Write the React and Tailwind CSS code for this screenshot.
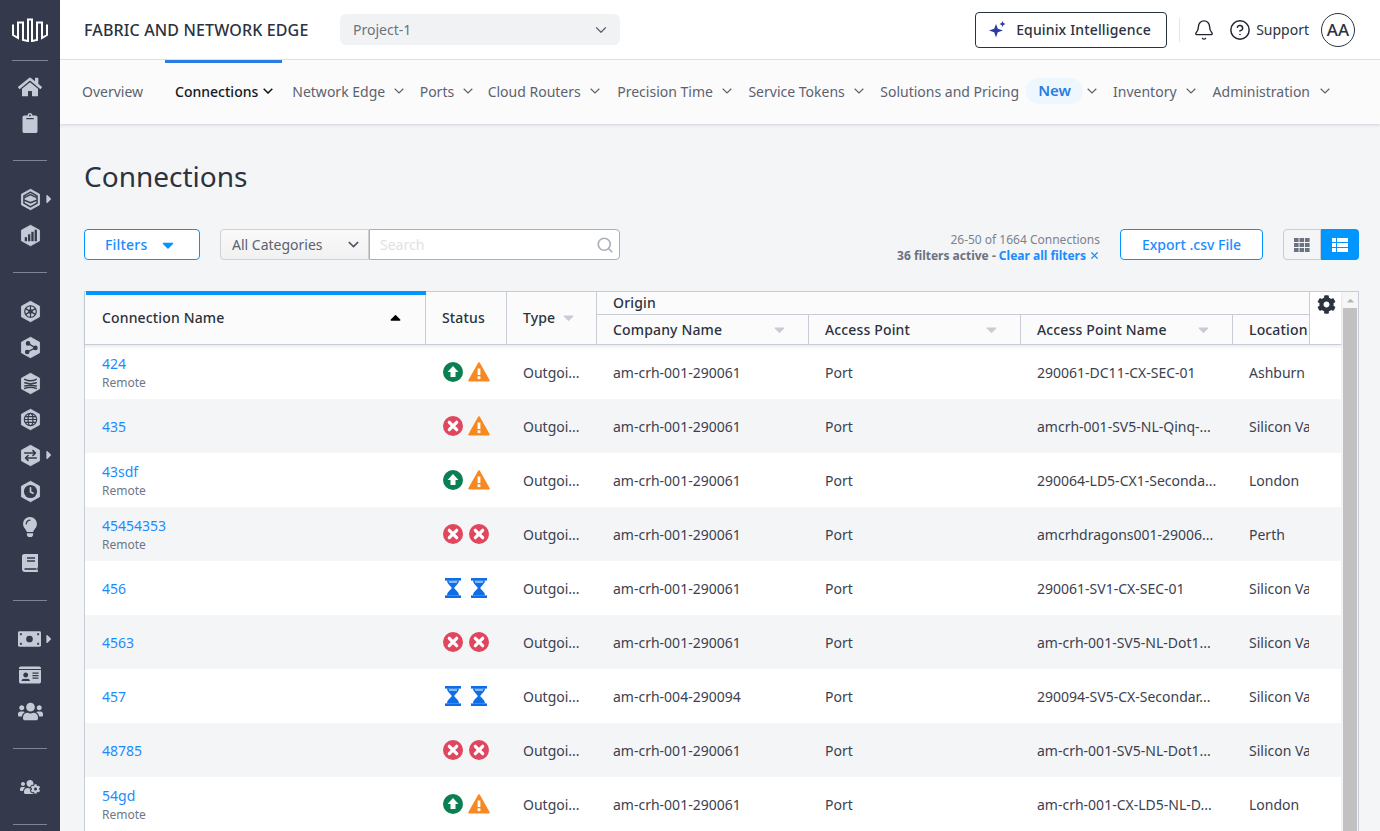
import React from "react";
import { Bell, CircleHelp, ChevronDown, Search, X } from "lucide-react";
import { FaHome, FaClipboard, FaLightbulb, FaIdCard, FaUsers, FaUsersCog, FaCog, FaCaretRight, FaCaretDown, FaCaretUp } from "react-icons/fa";

const C = "#c6cad6";
const D = "#343a4b";

function Hex({ children, size = 23 }) {
  return (
    <svg width={size} height={size} viewBox="0 0 28 28">
      <path d="M14 1.5 L25 7.5 V20.5 L14 26.5 L3 20.5 V7.5 Z" fill={C} stroke={C} strokeWidth="1" strokeLinejoin="round" />
      {children}
    </svg>
  );
}
const s = { stroke: D, strokeWidth: 1.8, fill: "none", strokeLinecap: "round", strokeLinejoin: "round" };

const hexes = {
  fabric: <g {...s}><path d="M14 5 22 9.5V18.5L14 23 6 18.5V9.5Z" /><path d="M7 11.5 14 8l7 3.5" /><path d="M7 15l7 3 7-3" /></g>,
  bars: <g fill={D}><rect x="7" y="16" width="2.8" height="5" /><rect x="11" y="12.5" width="2.8" height="8.5" /><rect x="15" y="9.5" width="2.8" height="11.5" /><rect x="19" y="7" width="2.8" height="14" /></g>,
  wheel: <g {...s} strokeWidth="1.5"><circle cx="14" cy="14" r="7" /><circle cx="14" cy="14" r="2" fill={D} /><path d="M14 7v14M8 10.5l12 7M20 10.5l-12 7" /></g>,
  nodes: <g fill={D} stroke={D} strokeWidth="1.6"><circle cx="11" cy="9" r="2" /><circle cx="20" cy="14.5" r="2" /><circle cx="10" cy="19.5" r="2" /><path d="M11 9 L20 14.5 L10 19.5" fill="none" /></g>,
  stack: <g {...s}><path d="M7 9c4 2 10 2 14 0" /><path d="M7 13l7 1.5 7-1.5" /><path d="M7 17l7-1 7 1" /><path d="M7 20c4-1.5 10-1.5 14 0" /></g>,
  globe: <g {...s} strokeWidth="1.5"><circle cx="14" cy="14" r="7.5" /><ellipse cx="14" cy="14" rx="3" ry="7.5" /><path d="M7 14h14M8 10.5h12M8 17.5h12" /></g>,
  arrows: <g {...s} strokeWidth="2"><path d="M7 11h13M17 8l3 3-3 3" /><path d="M21 17H8M11 14l-3 3 3 3" /></g>,
  clock: <g><circle cx="14" cy="14" r="8" fill={D} /><path d="M14 9.5v5l3.2 1.6" stroke={C} strokeWidth="2" fill="none" strokeLinecap="round" /></g>,
};

function Side({ children, arrow }) {
  return (
    <div className="relative flex h-9 w-[60px] items-center justify-center text-[#c6cad6]">
      {children}
      {arrow && <FaCaretRight className="absolute left-[42px] top-[11px] text-[#c6cad6]" size={14} />}
    </div>
  );
}
const Rule = ({ w = "w-[34px]", mt = "mt-[19px]" }) => <div className={`${mt} h-px ${w} bg-[#7e8494]`} />;

function Sidebar() {
  return (
    <aside className="flex h-full w-[60px] shrink-0 flex-col items-center bg-[#343a4b]">
      <div className="flex h-[60px] items-center justify-center">
        <svg width="36" height="24" viewBox="0 0 36 24" fill="none" stroke="#fff" strokeWidth="2" strokeLinejoin="miter">
          <path d="M1 6.5 V17 L6 20 V4.5 H11 V22 L16 23 V1.5 H20 V23 L25 22 V4.5 H30 V20 L35 17 V6.5" />
        </svg>
      </div>
      <div className="h-px w-9 bg-[#7e8494]" />
      <div className="mt-2" />
      <Side><FaHome size={24} /></Side>
      <Side><FaClipboard size={20} /></Side>
      <Rule />
      <div className="mt-5" />
      <Side arrow><Hex>{hexes.fabric}</Hex></Side>
      <Side><Hex>{hexes.bars}</Hex></Side>
      <Rule />
      <div className="mt-5" />
      <Side><Hex>{hexes.wheel}</Hex></Side>
      <Side><Hex>{hexes.nodes}</Hex></Side>
      <Side><Hex>{hexes.stack}</Hex></Side>
      <Side><Hex>{hexes.globe}</Hex></Side>
      <Side arrow><Hex>{hexes.arrows}</Hex></Side>
      <Side><Hex>{hexes.clock}</Hex></Side>
      <Side><FaLightbulb size={20} /></Side>
      <Side>
        <svg width="18" height="20" viewBox="0 0 18 20">
          <path d="M3 1h14v13c-1 1-1 3 0 4v1H4c-2 0-3-1-3-3V3c0-1 1-2 2-2z" fill={C} />
          <path d="M6 5h8M6 8h8" stroke={D} strokeWidth="1.6" />
          <path d="M3.5 16h12" stroke={D} strokeWidth="1.6" />
        </svg>
      </Side>
      <Rule />
      <div className="mt-5" />
      <Side arrow>
        <svg width="23" height="16" viewBox="0 0 24 16" className="-ml-[1px]">
          <rect width="24" height="16" rx="1.5" fill={C} />
          <circle cx="12" cy="8" r="3.5" fill={D} />
          <g fill={D}><rect x="2" y="2" width="2" height="2" /><rect x="20" y="2" width="2" height="2" /><rect x="2" y="12" width="2" height="2" /><rect x="20" y="12" width="2" height="2" /></g>
        </svg>
      </Side>
      <Side><FaIdCard size={22} /></Side>
      <Side><FaUsers size={25} /></Side>
      <Rule />
      <div className="mt-5" />
      <Side><FaUsersCog size={20} /></Side>
      <Rule />
    </aside>
  );
}

function Header() {
  return (
    <header className="flex h-[60px] shrink-0 items-center border-b border-[#e5e5e5] bg-white pl-6">
      <div className="w-[256px] text-[16px] font-medium leading-none tracking-[0.14px] text-[#2b3240]">FABRIC AND NETWORK EDGE</div>
      <div className="flex h-[31px] w-[280px] items-center justify-between rounded-md bg-[#f1f2f4] pl-[13px] pr-[10px] text-[14px] text-[#6b7280]">
        <span>Project-1</span>
        <ChevronDown size={18} className="text-[#5b6270]" strokeWidth={1.6} />
      </div>
      <div className="ml-auto flex items-center pr-[25px]">
        <button className="flex h-9 w-[192px] items-center rounded border border-[#2b3240] pl-[13px] text-[14px] font-medium tracking-[0.15px] text-[#2b3240]">
          <svg width="17" height="17" viewBox="0 0 17 17" className="mr-[10px]">
            <path d="M7 3 L8.8 7.7 L14 9.5 L8.8 11.3 L7 16.5 L5.2 11.3 L0 9.5 L5.2 7.7 Z" fill="#2a3a9e" />
            <path d="M13.5 0 L14.4 2.1 L16.5 3 L14.4 3.9 L13.5 6 L12.6 3.9 L10.5 3 L12.6 2.1 Z" fill="#2a3a9e" />
          </svg>
          Equinix Intelligence
        </button>
        <div className="ml-3 h-6 w-px bg-[#e2e4e8]" />
        <Bell size={22} strokeWidth={1.5} className="ml-[13px] text-[#1f2430]" />
        <CircleHelp size={22} strokeWidth={1.6} className="ml-[14px] text-[#1f2430]" />
        <span className="ml-[5px] text-[14px] text-[#2b3240]">Support</span>
        <div className="ml-3 flex h-[34px] w-[34px] items-center justify-center rounded-full border border-[#2b3240] text-[17px] font-medium text-[#2b3240]">AA</div>
      </div>
    </header>
  );
}

const Chev = ({ cls = "" }) => (
  <svg width="10" height="6" viewBox="0 0 10 6" fill="none" stroke="#5b6270" strokeWidth="1.2" className={cls}><path d="M.7.8 5 5l4.3-4.2" /></svg>
);

function Nav() {
  const items = [
    ["Network Edge", "mr-[15.5px]"],
    ["Ports", "mr-[14.5px]"],
    ["Cloud Routers", "mr-[17.5px]"],
    ["Precision Time", "mr-[16.5px]"],
    ["Service Tokens", "mr-[16.5px]"],
  ];
  return (
    <nav className="relative z-10 flex h-16 shrink-0 items-center bg-[#fbfbfb] pb-[2px] pl-[22px] text-[14px] text-[#5b6270] shadow-[0_1px_3px_rgba(40,50,70,0.18)]">
      <span className="mr-[32px]">Overview</span>
      <span className="relative mr-[19px] flex items-center font-medium text-[#14181f]">
        <span className="absolute -top-[21px] -left-[10px] h-[3px] w-[117px] bg-[#2a7de1]" />
        Connections
        <svg width="10" height="6" viewBox="0 0 10 6" fill="none" stroke="#14181f" strokeWidth="1.6" className="ml-[5px]"><path d="M.7.8 5 5l4.3-4.2" /></svg>
      </span>
      {items.map(([t, m]) => (
        <span key={t} className={`${m} flex items-center`}>
          {t}
          <Chev cls="ml-[9px]" />
        </span>
      ))}
      <span>Solutions and Pricing</span>
      <span className="ml-[7px] flex h-[26px] w-[57px] items-center justify-center rounded-full bg-[#eef6fe] pb-[2px] text-[15px] font-semibold text-[#2a7de1]">New</span>
      <Chev cls="ml-1" />
      <span className="ml-4 flex items-center">Inventory<Chev cls="ml-[9px]" /></span>
      <span className="ml-[17px] flex items-center">Administration<Chev cls="ml-[10px]" /></span>
    </nav>
  );
}

function Up() {
  return (
    <svg width="20" height="20" viewBox="0 0 20 20"><circle cx="10" cy="10" r="10" fill="#0a7f52" /><path d="M10 4 L15.5 10 H12.5 V15 H7.5 V10 H4.5 Z" fill="#fff" /></svg>
  );
}
function Warn() {
  return (
    <svg width="22" height="20" viewBox="0 0 22 20" className="-ml-px"><path d="M11 1 L21 18.6 H1 Z" fill="#f7891e" stroke="#f7891e" strokeWidth="1.6" strokeLinejoin="round" /><rect x="9.6" y="6.5" width="2.8" height="6.5" fill="#fff" /><rect x="9.6" y="14.3" width="2.8" height="2.8" fill="#fff" /></svg>
  );
}
function Err() {
  return (
    <svg width="20" height="20" viewBox="0 0 20 20"><circle cx="10" cy="10" r="10" fill="#e0475f" /><path d="M6.3 6.3 L13.7 13.7 M13.7 6.3 L6.3 13.7" stroke="#fff" strokeWidth="3.2" strokeLinecap="round" /></svg>
  );
}
function Hour() {
  return (
    <svg width="16" height="20" viewBox="0 0 16 20" className="mx-[2px]">
      <g fill="#0e6ee8">
        <rect x="0" y="0" width="16" height="2.6" />
        <rect x="0" y="17.4" width="16" height="2.6" />
        <path d="M2 2.6H14C14 6 10.2 8 9.2 10 10.2 12 14 14 14 17.4H2C2 14 5.8 12 6.8 10 5.8 8 2 6 2 2.6Z" />
      </g>
      <path d="M3.8 3.6H12.2L11.9 4.6H4.1Z" fill="#fff" />
    </svg>
  );
}

const up = [Up, Warn], ee = [Err, Err], ew = [Err, Warn], hh = [Hour, Hour];
const rows = [
  ["424", true, up, "am-crh-001-290061", "290061-DC11-CX-SEC-01", "Ashburn"],
  ["435", false, ew, "am-crh-001-290061", "amcrh-001-SV5-NL-Qinq-...", "Silicon Valley"],
  ["43sdf", true, up, "am-crh-001-290061", "290064-LD5-CX1-Seconda...", "London"],
  ["45454353", true, ee, "am-crh-001-290061", "amcrhdragons001-29006...", "Perth"],
  ["456", false, hh, "am-crh-001-290061", "290061-SV1-CX-SEC-01", "Silicon Valley"],
  ["4563", false, ee, "am-crh-001-290061", "am-crh-001-SV5-NL-Dot1...", "Silicon Valley"],
  ["457", false, hh, "am-crh-004-290094", "290094-SV5-CX-Secondar...", "Silicon Valley"],
  ["48785", false, ee, "am-crh-001-290061", "am-crh-001-SV5-NL-Dot1...", "Silicon Valley"],
  ["54gd", true, up, "am-crh-001-290061", "am-crh-001-CX-LD5-NL-D...", "London"],
];

function Caret({ cls = "text-[#c8ccd6]" }) {
  return <FaCaretDown size={17} className={cls} />;
}

function TableHead() {
  const sub = "flex h-full items-center border-r border-[#c8ccd6] pl-4 pr-[20px] justify-between";
  return (
    <div className="relative z-10 flex h-[53px] shrink-0 border-b border-[#c8ccd6] bg-[#fbfbfb] text-[14px] font-medium tracking-[0.15px] text-[#2b3240] shadow-[0_2px_3px_rgba(40,50,70,0.1)]">
      <div className="relative ml-px flex h-full w-[340px] items-center justify-between border-r border-[#c8ccd6] pb-[2px] pl-[16px] pr-[21px]">
        <span className="absolute -top-px -left-0 -right-px h-1 bg-[#0095ff]" />
        <span>Connection Name</span>
        <FaCaretUp size={17} className="text-black" />
      </div>
      <div className="flex w-[81px] items-center border-r border-[#c8ccd6] pb-[2px] pl-4">Status</div>
      <div className="flex w-[90px] items-center border-r border-[#c8ccd6] pb-[2px] pl-4">
        Type<Caret cls="ml-[5px] text-[#c8ccd6]" />
      </div>
      <div className="flex min-w-0 flex-1 flex-col">
        <div className="flex h-[23px] shrink-0 items-center border-b border-[#c8ccd6] pb-[2px] pl-4">Origin</div>
        <div className="flex flex-1">
          <div className={`${sub} w-[212px]`}>Company Name<Caret /></div>
          <div className={`${sub} w-[212px]`}>Access Point<Caret /></div>
          <div className={`${sub} w-[212px]`}>Access Point Name<Caret /></div>
          <div className="flex h-full w-[76px] items-center overflow-hidden whitespace-nowrap pl-4">Location</div>
        </div>
      </div>
      <div className="absolute right-0 top-0 z-20 flex h-[52px] w-[32px] justify-center border-l border-[#c8ccd6] bg-white pl-px pt-[3px]">
        <FaCog size={19} className="text-[#2b3240]" />
      </div>
    </div>
  );
}

function Row({ r, i }) {
  const [name, remote, icons, company, apn, loc] = r;
  return (
    <div className={`flex h-[54px] shrink-0 items-center text-[14px] text-[#3a4150] ${i % 2 ? "bg-[#f4f5f7]" : "bg-white"}`}>
      <div className={`flex w-[341px] flex-col justify-center pl-[17px] ${remote ? "pt-[3px]" : "pt-[2px]"}`}>
        <span className="text-[14px] leading-[18px] text-[#1a8cff]">{name}</span>
        {remote && <span className="mt-px text-[12px] leading-[18px] text-[#6f7684]">Remote</span>}
      </div>
      <div className="flex w-[81px] items-center gap-[6px] pl-[17px]">
        {icons.map((I, k) => <I key={k} />)}
      </div>
      <div className="w-[90px] pl-4">Outgoi...</div>
      <div className="w-[212px] pl-4">{company}</div>
      <div className="w-[212px] pl-4">Port</div>
      <div className="w-[212px] whitespace-nowrap pl-4">{apn}</div>
      <div className="w-[76px] overflow-hidden whitespace-nowrap pl-4">{loc}</div>
    </div>
  );
}

function Toolbar() {
  return (
    <div className="mt-[33px] flex h-[31px] items-center pr-[21px]">
      <button className="flex h-full w-[116px] items-center rounded-sm border border-[#0095ff] bg-white pl-5 text-[14px] font-medium tracking-[0.2px] text-[#1a8cff]">
        Filters
        <FaCaretDown size={18} className="ml-[12px] text-[#0095ff]" />
      </button>
      <div className="ml-5 flex h-full w-[149px] items-center justify-between rounded-l-sm border border-[#cfd1d4] bg-gradient-to-b from-[#fafafa] to-[#f1f1f1] pl-[11px] pr-[9px] text-[14px] text-[#5b6270]">
        <span>All Categories</span>
        <svg width="11" height="7" viewBox="0 0 11 7" fill="none" stroke="#4b5160" strokeWidth="1.7"><path d="M.8 1 5.5 5.6 10.2 1" /></svg>
      </div>
      <div className="flex h-full w-[251px] items-center justify-between rounded-r-sm border border-[#a9b0bb] bg-white pl-[10px] pr-[5px] text-[14px] text-[#dfe1e5]">
        <span>Search</span>
        <Search size={18} className="text-[#a9b0bb]" strokeWidth={2.2} />
      </div>
      <div className="ml-auto flex flex-col items-end pt-[6px] text-[12px] leading-[16px]">
        <span className="text-[#7b8290]">26-50 of 1664 Connections</span>
        <span className="flex items-center font-bold text-[#6b7280]">
          36 filters active -&nbsp;<span className="text-[#1a8cff]">Clear all filters</span>
          <X size={11} strokeWidth={2.6} className="ml-[3px] text-[#1a8cff]" />
        </span>
      </div>
      <button className="ml-5 flex h-full w-[143px] items-center justify-center rounded-sm border border-[#0095ff] bg-white text-[14px] font-medium text-[#1a8cff]">Export .csv File</button>
      <div className="ml-5 flex h-full">
        <div className="flex w-[38px] items-center justify-center rounded-l-sm border border-[#c8ccd6] bg-[#f4f5f7]">
          <svg width="16" height="14" viewBox="0 0 16 14" fill="#6b7280">
            {[0, 5.5, 11].map((x) => [0, 5, 10].map((y) => <rect key={x + "-" + y} x={x} y={y} width="4.6" height="4" />))}
          </svg>
        </div>
        <div className="flex w-[38px] items-center justify-center rounded-r-sm bg-[#0095ff]">
          <svg width="16" height="14" viewBox="0 0 16 14" fill="#fff">
            {[0, 5, 10].map((y) => <g key={y}><rect x="0" y={y} width="4" height="4" /><rect x="5" y={y} width="11" height="4" /></g>)}
          </svg>
        </div>
      </div>
    </div>
  );
}

export default function App() {
  return (
    <div className="flex h-screen w-full overflow-hidden bg-[#f4f5f7] font-['Noto_Sans',sans-serif]">
      <Sidebar />
      <div className="flex min-w-0 flex-1 flex-col">
        <Header />
        <Nav />
        <main className="min-h-0 flex-1 overflow-hidden pl-6">
          <h1 className="mt-[32px] text-[28px] font-normal leading-[40px] text-[#2b3240]">Connections</h1>
          <Toolbar />
          <div className="mr-[21px] mt-[31px] flex h-[560px] border border-[#c8ccd6] bg-white">
            <div className="flex min-w-0 flex-1 flex-col">
              <TableHead />
              {rows.map((r, i) => <Row key={r[0]} r={r} i={i} />)}
            </div>
            <div className="flex w-[17px] shrink-0 flex-col items-center border-l border-[#f0f0f0] bg-[#f6f6f6]">
              <FaCaretUp size={11} className="mt-[3px] text-[#b5b5b5]" />
              <div className="mt-[2px] w-[14px] flex-1 bg-[#c1c1c1]" />
            </div>
          </div>
        </main>
      </div>
    </div>
  );
}
